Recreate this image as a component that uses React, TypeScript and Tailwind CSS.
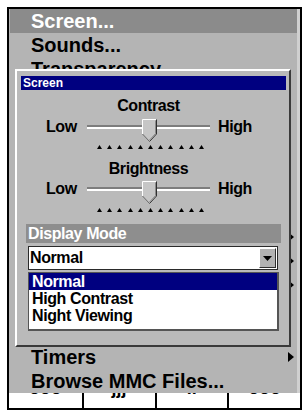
// rows under the dialog keep only their arrows; their labels never show
const menuItems = [
  { label: "Screen...", active: true },
  { label: "Sounds..." },
  { label: "Transparency...", clip: true },
  { label: "" },
  { label: "" },
  { label: "" },
  { label: "" },
  { label: "" },
  { label: "" },
  { label: "", sub: true },
  { label: "", sub: true },
  { label: "", sub: true },
  { label: "" },
  { label: "" },
  { label: "Timers", sub: true },
  { label: "Browse MMC Files..." },
];

const softKeys = ["ooo", "jjj", "..", "ooo"];

function ArrowRight({ className }: { className?: string }) {
  return (
    <svg viewBox="0 0 6 10" className={className} aria-hidden>
      <path d="M0 0 L6 5 L0 10 Z" fill="#000" />
    </svg>
  );
}

function Thumb() {
  return (
    <svg
      viewBox="0 0 15 23"
      className="absolute left-[55px] top-[-8px] h-[23px] w-[15px]"
      aria-hidden
    >
      <path d="M0.5 0.5 H14.5 V15 L7.5 22.5 L0.5 15 Z" fill="#c6c6c6" />
      <path d="M0.5 15 V0.5 H14" stroke="#ffffff" fill="none" />
      <path d="M14.5 0.5 V15 L7.5 22.5" stroke="#303030" fill="none" />
      <path d="M7.5 22.5 L0.5 15" stroke="#6a6a6a" fill="none" />
      <path d="M13.5 1.5 V14.6 L7.5 21" stroke="#8a8a8a" fill="none" />
    </svg>
  );
}

function Ticks() {
  return (
    <div className="ml-[80px] flex h-[4px] w-[107px] justify-between">
      {Array.from({ length: 11 }).map((_, i) => (
        <svg key={i} viewBox="0 0 5 4" className="h-[4px] w-[5px]" aria-hidden>
          <path d="M2.5 0 L5 4 L0 4 Z" fill="#000" />
        </svg>
      ))}
    </div>
  );
}

function Slider() {
  return (
    <div className="ml-[29px] flex h-[23px] items-center">
      <span className="w-[41px] text-[16px] font-bold leading-[18px] tracking-[-0.4px]">Low</span>
      <div className="relative h-[4px] w-[123px] border-t-2 border-[#7d7d7d] bg-white">
        <Thumb />
      </div>
      <span className="ml-[8px] text-[16px] font-bold leading-[18px] tracking-[-0.4px]">High</span>
    </div>
  );
}

function ScreenDialog() {
  return (
    <div className="absolute left-[15px] top-[69px] flex h-[278px] w-[276px] flex-col border-2 border-b-[#3a3a3a] border-l-white border-r-[#3a3a3a] border-t-white bg-[#bababa]">
      <div className="ml-[4px] mt-[5px] h-[14px] w-[265px] bg-[#000080] pl-[2px] text-[12px] font-bold leading-[14px] text-white">
        Screen
      </div>

      <div className="ml-[70px] mt-[7px] h-[18px] w-[123px] text-center text-[16px] font-bold leading-[18px] tracking-[-0.4px]">
        Contrast
      </div>
      <Slider />
      <div className="mt-[7px]">
        <Ticks />
      </div>

      <div className="ml-[70px] mt-[11px] h-[17px] w-[123px] text-center text-[16px] font-bold leading-[17px] tracking-[-0.4px]">
        Brightness
      </div>
      <Slider />
      <div className="mt-[8px]">
        <Ticks />
      </div>

      <div className="ml-[9px] mt-[12px] h-[19px] w-[255px] bg-[#8e8e8e] pl-[2px] text-[16px] font-bold leading-[19px] tracking-[-0.4px] text-white">
        Display Mode
      </div>

      <div className="ml-[11px] mt-[3px] flex h-[24px] w-[250px] items-center justify-between border border-[#2a2a2a] bg-white pl-[1px]">
        <span className="text-[16px] font-bold leading-[18px] tracking-[-0.4px]">Normal</span>
        <div className="mr-[1px] flex h-[20px] w-[17px] items-center justify-center border border-b-[#303030] border-l-white border-r-[#303030] border-t-white bg-[#b2b2b2]">
          <svg viewBox="0 0 9 5" className="h-[5px] w-[9px]" aria-hidden>
            <path d="M0 0 H9 L4.5 5 Z" fill="#000" />
          </svg>
        </div>
      </div>

      <div className="ml-[11px] mt-[2px] h-[59px] w-[251px] border border-b-2 border-r-2 border-[#555555] bg-white">
        <div className="h-[17px] bg-[#000080] pl-[3px] text-[16px] font-bold leading-[17px] tracking-[-0.4px] text-white">
          Normal
        </div>
        <div className="h-[17px] pl-[3px] text-[16px] font-bold leading-[17px] tracking-[-0.4px]">
          High Contrast
        </div>
        <div className="h-[17px] pl-[3px] text-[16px] font-bold leading-[17px] tracking-[-0.4px]">
          Night Viewing
        </div>
      </div>
    </div>
  );
}

export default function App() {
  return (
    <div className="relative h-[410px] w-[306px] overflow-hidden bg-white pl-[7px] pt-[7px] font-['Liberation_Sans',Arial,sans-serif] text-black">
      <div className="flex h-[403px] w-[295px] flex-col border-2 border-black bg-[#b4b4b4]">
        <div className="flex h-[384px]">
          <div className="flex-1">
            {menuItems.map((item, i) => (
              <div
                key={i}
                className={
                  item.active
                    ? "ml-[1px] flex h-[24px] items-center bg-[#8b8b8b] pl-[21px] text-white"
                    : "ml-[1px] flex h-[24px] items-start pl-[21px]"
                }
              >
                {item.clip ? (
                  <div className="h-[12px] overflow-hidden">
                    <span className="block text-[20px] font-bold leading-[24px]">{item.label}</span>
                  </div>
                ) : (
                  <span className="text-[20px] font-bold leading-[24px]">{item.label}</span>
                )}
                {item.sub ? (
                  <ArrowRight className="ml-auto mr-[3px] mt-[7px] h-[10px] w-[6px]" />
                ) : null}
              </div>
            ))}
          </div>
          <div className="w-[3px] bg-[#d0d0d0]" />
        </div>
        <div className="grid h-[15px] grid-cols-4 bg-white">
          {softKeys.map((k, i) => (
            <div
              key={i}
              className={
                i === 0
                  ? "flex justify-center overflow-hidden"
                  : "flex justify-center overflow-hidden border-l-2 border-black"
              }
            >
              <span className="-mt-[14px] text-[18px] font-bold leading-[18px]">{k}</span>
            </div>
          ))}
        </div>
      </div>
      <ScreenDialog />
    </div>
  );
}
